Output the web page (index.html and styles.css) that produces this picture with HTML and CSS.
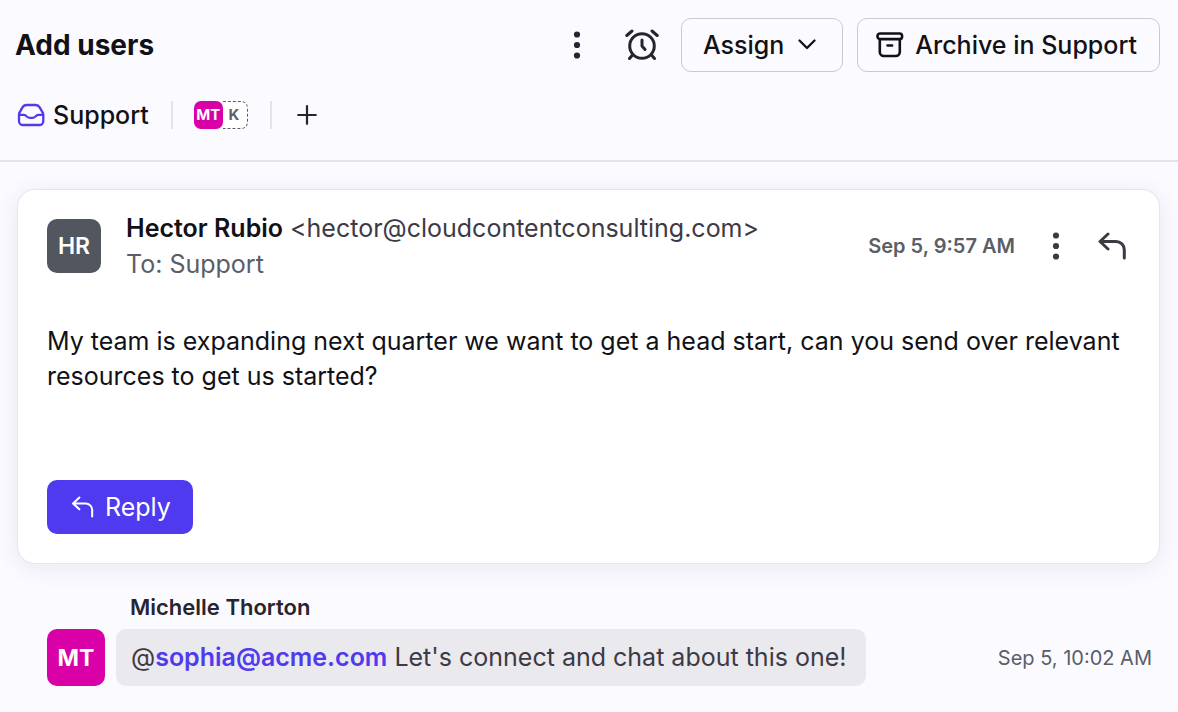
FILE: index.html
```html
<!DOCTYPE html>
<html lang="en">
<head>
<meta charset="utf-8">
<meta name="viewport" content="width=device-width, initial-scale=1">
<title>Add users</title>
<link rel="stylesheet" href="styles.css">
</head>
<body>
<header class="header">
  <div class="title-row">
    <h1 class="title">Add users</h1>
    <div class="actions">
      <button class="icon-button" type="button" aria-label="More options">
        <svg class="dots" viewBox="0 0 8 28"><circle cx="4" cy="3.500" r="3.100"/><circle cx="4" cy="14" r="3.100"/><circle cx="4" cy="24.500" r="3.100"/></svg>
      </button>
      <button class="icon-button snooze" type="button" aria-label="Snooze">
        <svg class="stroke" width="34" height="32" viewBox="0 0 34 32" stroke-width="3"><circle cx="17" cy="17" r="12.300"/><path d="M17 11v6l3 3.500M1.800 6.500 7 2M32.200 6.500 27 2M7.500 26 4.500 29.500M26.500 26l3 3.500"/></svg>
      </button>
      <button class="button" type="button">Assign
        <svg class="stroke chevron" width="18" height="12" viewBox="0 0 18 12" stroke-width="2.300"><path d="M1.500 1.500 9 9 16.500 1.500"/></svg>
      </button>
      <button class="button archive" type="button">
        <svg class="stroke" width="28" height="26" viewBox="0 0 28 26" stroke-width="2.600"><rect x="1.500" y="1.500" width="24.600" height="5.600" rx="2.600"/><path d="M3.800 7.400V20a4 4 0 0 0 4 4h12a4 4 0 0 0 4-4V7.400M11.500 13.500h4.600"/></svg>
        Archive in Support</button>
    </div>
  </div>
  <div class="meta-row">
    <a class="inbox" href="#support">
      <svg class="stroke" width="28" height="24" viewBox="0 0 28 24" stroke-width="2.300"><path d="M2 11.500Q2 10.700 2.500 9.600L5.500 4.400Q6.900 2 9.500 2h9.200q2.600 0 4 2.400l3 5.200q.6 1.100.6 1.900V18a4 4 0 0 1-4 4H6a4 4 0 0 1-4-4zM2.300 11.900h4.500q1.700 0 2.600 1.200 1.300 1.700 3.600 1.700h2.300q2.300 0 3.600-1.700.9-1.200 2.600-1.200H26"/></svg>
      Support</a>
    <div class="people">
      <span class="person">MT</span><span class="person guest">K</span>
    </div>
    <button class="add" type="button" aria-label="Add">
      <svg class="stroke" width="20" height="20" viewBox="0 0 20 20" stroke-width="2.200"><path d="M10 1.200v17.600M1.200 10h17.600"/></svg>
    </button>
  </div>
</header>
<main class="thread">
  <article class="card">
    <div class="card-head">
      <span class="avatar">HR</span>
      <div class="sender">
        <div class="from"><strong class="name">Hector Rubio</strong> &lt;hector@cloudcontentconsulting.com&gt;</div>
        <div class="to">To: Support</div>
      </div>
      <time class="time strong">Sep 5, 9:57 AM</time>
      <div class="card-actions">
        <button class="icon-button" type="button" aria-label="Message options">
          <svg class="dots" viewBox="0 0 8 28"><circle cx="4" cy="3.500" r="3.100"/><circle cx="4" cy="14" r="3.100"/><circle cx="4" cy="24.500" r="3.100"/></svg>
        </button>
        <button class="icon-button" type="button" aria-label="Reply to message">
          <svg class="stroke" width="28" height="28" viewBox="0 0 28 28" stroke-width="3"><path d="M10 2 2 9.500l8 7.500M2.500 9.500H18a8.300 8.300 0 0 1 8.300 8.300V26"/></svg>
        </button>
      </div>
    </div>
    <p class="body">My team is expanding next quarter we want to get a head start, can you send over relevant resources to get us started?</p>
    <button class="reply" type="button">
      <svg class="stroke" width="23" height="22" viewBox="0 0 28 28" stroke-width="2.600"><path d="M10 2 2 9.500l8 7.500M2.500 9.500H18a8.300 8.300 0 0 1 8.300 8.300V26"/></svg>
      Reply</button>
  </article>
  <section class="comment">
    <div class="author">Michelle Thorton</div>
    <span class="avatar commenter">MT</span>
    <p class="bubble">@<a class="mention" href="mailto:sophia@acme.com">sophia@acme.com</a> Let's connect and chat about this one!</p>
    <time class="time">Sep 5, 10:02 AM</time>
  </section>
</main>
</body>
</html>
```
FILE: styles.css
```css
* {
  box-sizing: border-box;
}

body {
  margin: 0;
  background: #fbfaff;
  color: #111116;
  font: 400 25px/36px Inter, "Liberation Sans", sans-serif;
}

button {
  margin: 0;
  font: inherit;
  color: inherit;
  cursor: pointer;
}

a {
  color: inherit;
  text-decoration: none;
}

svg {
  display: block;
  flex: none;
}

.stroke {
  fill: none;
  stroke: currentColor;
  stroke-linecap: round;
  stroke-linejoin: round;
}

.dots {
  width: 8px;
  height: 28px;
  fill: currentColor;
}

.header {
  padding: 18px 18px 31px 15px;
  border-bottom: 2px solid #e4e3ec;
}

.title-row,
.actions,
.meta-row,
.inbox,
.people,
.card-head,
.card-actions {
  display: flex;
  align-items: center;
}

.title-row {
  justify-content: space-between;
}

.title {
  margin: 0;
  font-size: 28px;
  font-weight: 700;
}

.actions {
  gap: 14px;
}

.icon-button,
.add {
  padding: 0;
  border: 0;
  background: none;
  color: #28242f;
}

.snooze {
  margin: 0 8px 0 30px;
}

.button,
.reply {
  display: flex;
  align-items: center;
  height: 54px;
  border-radius: 10px;
}

.button {
  gap: 14px;
  padding: 0 20px 0 21px;
  border: 1px solid #cac9d0;
  background: #fbfaff;
  font-weight: 500;
}

.chevron {
  margin-right: 6px;
}

.archive {
  gap: 11px;
  padding: 0 22px 0 18px;
}

.meta-row {
  height: 28px;
  margin-top: 29px;
}

.inbox {
  gap: 8px;
  color: #111116;
  font-weight: 500;
  padding-left: 2px;
}

.inbox svg {
  color: #4f3aef;
}

.people {
  height: 28px;
  margin: 0 25px 0 22px;
  padding: 0 22px 0 21px;
  border: solid #e4e3ec;
  border-width: 0 2px;
}

.person {
  display: flex;
  align-items: center;
  justify-content: center;
  width: 29px;
  height: 28px;
  border-radius: 7px;
  background: #d800a6;
  color: #fff;
  font-size: 15px;
  font-weight: 700;
}

.guest {
  width: 25px;
  border: 1px dashed #5c5e68;
  border-left: 0;
  border-radius: 0 7px 7px 0;
  background: #fff;
  color: #5c5e68;
  padding-right: 2px;
}

.thread {
  padding: 27px 18px 26px 17px;
}

.card {
  padding: 20px 29px 29px;
  border: 1px solid #e6e4ec;
  border-radius: 18px;
  background: #fff;
  box-shadow: 0 4px 24px rgba(40, 30, 60, 0.08);
}

.avatar {
  display: flex;
  align-items: center;
  justify-content: center;
  flex: none;
  width: 54px;
  height: 54px;
  border-radius: 10px;
  background: #52565f;
  color: #fff;
  font-size: 23px;
  font-weight: 600;
}

.sender {
  flex: 1;
  min-width: 0;
  margin-left: 25px;
}

.from {
  color: #3e3a45;
}

.name {
  color: #111116;
  font-weight: 600;
}

.to {
  color: #5a5e67;
}

.time {
  color: #5a5e67;
  font-size: 20px;
}

.strong {
  font-weight: 600;
}

.card-actions {
  gap: 38px;
  margin: 0 4px 0 37px;
}

.card-actions .icon-button {
  color: #3e3a45;
}

.body {
  margin: 42px 0 86px;
  line-height: 35px;
}

.reply {
  gap: 11px;
  padding: 0 22px 0 24px;
  border: 0;
  background: #4f3aef;
  color: #fff;
}

.comment {
  display: grid;
  grid-template-columns: 58px auto 1fr;
  align-items: center;
  gap: 8px 11px;
  padding: 29px 8px 0 30px;
}

.author {
  grid-column: 2 / -1;
  padding-left: 14px;
  color: #28242f;
  font-size: 22px;
  font-weight: 600;
  line-height: 28px;
}

.commenter {
  width: 58px;
  height: 57px;
  background: #d800a6;
  font-weight: 700;
}

.bubble {
  margin: 0;
  padding: 10px 20px 11px 15px;
  border-radius: 10px;
  background: #eae9ed;
  color: #3e3a45;
}

.mention {
  color: #4f3aef;
  font-weight: 600;
}

.comment .time {
  justify-self: end;
}
```
